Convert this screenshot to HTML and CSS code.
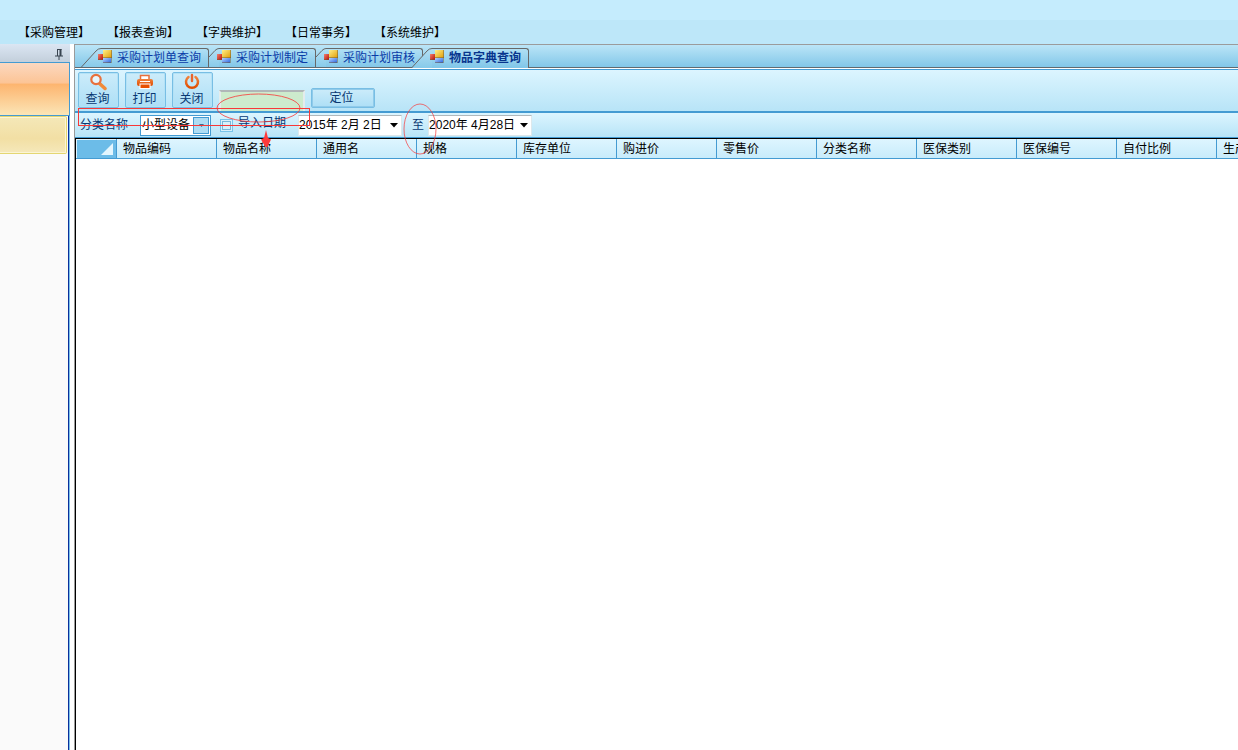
FILE: index.html
```html
<!DOCTYPE html>
<html lang="zh-CN">
<head>
<meta charset="utf-8">
<title>物品字典查询</title>
<link rel="stylesheet" href="styles.css">
</head>
<body>
<svg class="defs" width="0" height="0" aria-hidden="true">
  <defs>
    <linearGradient id="tabFill" x1="0" y1="0" x2="0" y2="1"><stop offset="0" stop-color="#b5e0f4"/><stop offset="1" stop-color="#86caea"/></linearGradient>
    <linearGradient id="gold" x1="0" y1="0" x2="1" y2="1"><stop offset="0" stop-color="#fff08a"/><stop offset="1" stop-color="#e09a00"/></linearGradient>
    <linearGradient id="red" x1="0" y1="0" x2="1" y2="1"><stop offset="0" stop-color="#f08070"/><stop offset="1" stop-color="#b81004"/></linearGradient>
    <linearGradient id="blue" x1="0" y1="0" x2="1" y2="1"><stop offset="0" stop-color="#b4d4ff"/><stop offset="1" stop-color="#2a62e0"/></linearGradient>
    <linearGradient id="orange" x1="0" y1="0" x2="0" y2="1"><stop offset="0" stop-color="#f0823c"/><stop offset="1" stop-color="#e04c00"/></linearGradient>
    <symbol id="form" viewBox="0 0 14 14">
      <rect x="0" y="4" width="5" height="6" fill="url(#red)"/>
      <rect x="5" y="8" width="8" height="5" fill="url(#blue)"/>
      <rect x="5" y="0" width="9" height="8" fill="url(#gold)"/>
      <path d="M13.5 0V13M5 7.5H14M5 12.5H13M0 9.500H5" stroke="#705c38" stroke-opacity=".5" fill="none"/>
    </symbol>
    <symbol id="slantWide" viewBox="0 0 20 20">
      <path d="M0 20 15 3Q17 .5 20 .5V20Z" fill="url(#tabFill)"/>
      <path d="M0 19.500 15 3Q17 .5 20 .5" fill="none" stroke="#686868"/>
    </symbol>
    <symbol id="slant" viewBox="0 0 10 20">
      <path d="M0 20V9L6 2.500Q8 .5 10 .5V20Z" fill="url(#tabFill)"/>
      <path d="M0 9 6 2.500Q8 .5 10 .5" fill="none" stroke="#686868"/>
    </symbol>
  </defs>
</svg>
<header class="top">
  <div class="title-strip"></div>
  <nav class="menu">
    <a href="#purchase">【采购管理】</a>
    <a href="#report">【报表查询】</a>
    <a href="#dict">【字典维护】</a>
    <a href="#daily">【日常事务】</a>
    <a href="#system">【系统维护】</a>
  </nav>
</header>
<div class="workspace">
  <aside class="side">
    <div class="side-head">
      <button class="pin" type="button" aria-label="固定">
        <svg width="8" height="11" viewBox="0 0 8 11"><path d="M2 .5H6.500M2.500 0V7M0 7H8M4 7V11" stroke="#384450" fill="none"/><path d="M5.500 0V7" stroke="#384450" stroke-width="2"/></svg>
      </button>
    </div>
    <div class="side-group"></div>
    <div class="side-body"><div class="side-item"></div></div>
  </aside>
  <main class="main">
    <div class="tabs">
      <button class="tab wide" type="button"><svg class="edge"><use href="#slantWide"/></svg><svg class="form"><use href="#form"/></svg><span>采购计划单查询</span></button>
      <button class="tab" type="button"><svg class="edge"><use href="#slant"/></svg><svg class="form"><use href="#form"/></svg><span>采购计划制定</span></button>
      <button class="tab" type="button"><svg class="edge"><use href="#slant"/></svg><svg class="form"><use href="#form"/></svg><span>采购计划审核</span></button>
      <button class="tab wide active" type="button"><svg class="edge"><use href="#slantWide"/></svg><svg class="form"><use href="#form"/></svg><span>物品字典查询</span></button>
      <div class="tab-rest"></div>
    </div>
    <div class="toolbar">
      <button class="tool" type="button">
        <svg width="18" height="18" viewBox="0 0 18 18"><path d="m10.500 10.500 5.500 5" stroke="#f08a38" stroke-width="3.500" stroke-linecap="round"/><circle cx="7" cy="6.500" r="4.700" fill="#e8f6fc" stroke="#e8703c" stroke-width="2.200"/></svg>
        <span>查询</span>
      </button>
      <button class="tool" type="button">
        <svg width="18" height="18" viewBox="0 0 18 18"><path d="M4.500 6V2.500H13V6" fill="#fff" stroke="#e8703c" stroke-width="1.500"/><rect x="1" y="6" width="16" height="7" rx="2" fill="url(#orange)"/><path d="M4 8.500H14" stroke="#fff"/><rect x="4" y="11" width="10" height="4.500" fill="#e85000" stroke="#fff"/></svg>
        <span>打印</span>
      </button>
      <button class="tool" type="button">
        <svg width="18" height="18" viewBox="0 0 18 18"><path d="M5.500 4A6 6 0 1 0 12.500 4" fill="none" stroke="url(#orange)" stroke-width="2.500" stroke-linecap="round"/><path d="M9 2V8" stroke="#e8642c" stroke-width="2.400" stroke-linecap="round"/></svg>
        <span>关闭</span>
      </button>
      <input class="search" type="text" aria-label="定位内容">
      <button class="locate" type="button">定位</button>
    </div>
    <div class="filter">
      <label for="category">分类名称</label>
      <div class="combo">
        <select id="category"><option>小型设备</option></select>
        <span class="drop"><svg width="5" height="3" viewBox="0 0 5 3"><path d="M0 0H5L2.500 3Z" fill="#3a6e92"/></svg></span>
      </div>
      <input class="check" id="byDate" type="checkbox">
      <label class="date-label" for="byDate">导入日期</label>
      <div class="date">
        <input type="text" value="2015年 2月 2日" aria-label="开始日期">
        <button type="button" aria-label="选择开始日期"><svg width="8" height="5" viewBox="0 0 8 5"><path d="M0 0H8L4 4.500Z"/></svg></button>
      </div>
      <span class="to">至</span>
      <div class="date">
        <input type="text" value="2020年 4月28日" aria-label="结束日期">
        <button type="button" aria-label="选择结束日期"><svg width="8" height="5" viewBox="0 0 8 5"><path d="M0 0H8L4 4.500Z"/></svg></button>
      </div>
    </div>
    <div class="grid">
      <table>
        <thead>
          <tr>
            <th class="corner"><svg width="12" height="12" viewBox="0 0 12 12"><path d="M12 0V12H0Z" fill="#e4f6fe"/></svg></th>
            <th>物品编码</th><th>物品名称</th><th>通用名</th><th>规格</th><th>库存单位</th><th>购进价</th><th>零售价</th><th>分类名称</th><th>医保类别</th><th>医保编号</th><th>自付比例</th><th>生产厂家</th>
          </tr>
        </thead>
      </table>
    </div>
    <svg class="marks" width="460" height="120" viewBox="74 44 460 120" aria-hidden="true">
      <g fill="none" stroke="#f83838">
        <rect x="78.500" y="108.500" width="231" height="17"/>
        <ellipse cx="258.500" cy="108" rx="41.500" ry="14" stroke-opacity=".8"/>
        <ellipse cx="420" cy="129" rx="16" ry="25" stroke-opacity=".7"/>
      </g>
      <path d="M266 130 268 138 271 139.500 267.500 147H265.500L261 139.500 264 138Z" fill="#ff3a3a"/>
    </svg>
  </main>
</div>
</body>
</html>
```
FILE: styles.css
```css
* { box-sizing: border-box; }
html, body { height: 100%; }
body {
  margin: 0;
  display: flex;
  flex-direction: column;
  overflow: hidden;
  background: #fff;
  color: #000;
  font: 12px/16px "Liberation Sans", "Noto Sans CJK SC", sans-serif;
}
button, input, select { font: inherit; color: inherit; margin: 0; padding: 0; border: 0; border-radius: 0; }
button { background: none; }
.defs { position: absolute; }

.top { background: #bde7f9; }
.title-strip { height: 20px; background: #c5ecfd; }
.menu { display: flex; gap: 17px; height: 24px; padding: 5px 18px 0; }
.menu a { color: #000; text-decoration: none; white-space: nowrap; }

.workspace { flex: 1; display: flex; min-height: 0; }
.side { width: 70px; flex: none; display: flex; flex-direction: column; margin-right: 4px; }
.side-head {
  height: 18px;
  display: flex;
  justify-content: flex-end;
  padding: 5px 7px 0 0;
  background: linear-gradient(#dbe6f3, #c3cfdb);
}
.pin { display: flex; width: 8px; height: 11px; }
.side-group {
  height: 54px;
  border: solid #449bd2;
  border-width: 1px 1px 1px 0;
  background: linear-gradient(#fbd8c0, #fcc495 39%, #fdb46e 40%, #fbe5b6);
}
.side-body {
  flex: 1;
  background: #fafafa;
  border-right: 1px solid #7cc0e8;
  box-shadow: inset -1px 0 #0a309c;
  padding-right: 2px;
}
.side-item {
  height: 38px;
  border: solid #e4d672;
  border-width: 1px 1px 1px 0;
  border-radius: 0 2px 2px 0;
  box-shadow: inset -1px 1px #fbf5d4, inset 0 -1px #fbf5d4;
  background: linear-gradient(#f4e8b8, #f2dfa4 60%, #f5e8ba);
}

.main {
  position: relative;
  flex: 1;
  min-width: 0;
  display: flex;
  flex-direction: column;
  border: solid #9b9b9b;
  border-width: 1px 0 0 1px;
}
.tabs { display: flex; height: 23px; padding: 3px 0 0 6px; background: linear-gradient(#bbe5f7, #80c6e8); position: relative; }
.tabs::before { content: ""; position: absolute; left: 0; bottom: 0; width: 6px; height: 1px; background: #606a70; }
.tab {
  position: relative;
  display: flex;
  align-items: center;
  gap: 5px;
  height: 20px;
  padding: 0 8px;
  border-bottom: 1px solid #606a70;
  color: #0a3ca8;
  white-space: nowrap;
}
.tab::before {
  content: "";
  position: absolute;
  inset: 0 0 0 10px;
  border: solid #686868;
  border-width: 1px 1px 0 0;
  border-radius: 0 3px 0 0;
}
.tab.wide { padding-left: 17px; }
.tab.wide::before { left: 20px; }
.edge { position: absolute; left: 0; top: 0; width: 10px; height: 20px; clip-path: inset(0 0 1px 0); }
.wide .edge { width: 20px; }
.form { position: relative; width: 14px; height: 14px; margin-bottom: 2px; }
.tab span { position: relative; }
.tab.active { margin-left: -11px; padding-left: 18px; border-bottom: 0; font-weight: bold; color: #08358e; }
.active .edge { clip-path: none; }
.tab-rest { flex: 1; height: 20px; border-bottom: 1px solid #606a70; }

.toolbar {
  display: flex;
  align-items: flex-start;
  height: 42px;
  padding: 2px 3px 0;
  border-top: 1px solid #449bd2;
  margin-top: 1px;
  background: linear-gradient(#dcf5ff, #b8e4f7);
}
.tool, .locate {
  border: 1px solid #78bee4;
  border-radius: 2px;
  box-shadow: inset 0 0 0 1px #b4e2f6;
  background: linear-gradient(#ccecfa, #addff6);
  color: #083872;
}
.tool {
  display: flex;
  flex-direction: column;
  align-items: center;
  width: 41px;
  height: 36px;
  margin-right: 6px;
  padding-right: 2px;
}
.tool span { line-height: 16px; }
.search {
  align-self: flex-end;
  width: 86px;
  height: 21px;
  background: #cdebcd;
  border: solid #e4ecec;
  border-width: 2px 2px 0;
  border-top-color: #b0b6b8;
}
.locate { width: 64px; height: 20px; margin: 16px 0 0 6px; padding-right: 3px; box-shadow: inset 0 0 0 1px #90cbea; line-height: 16px; }

.filter {
  display: flex;
  align-items: center;
  height: 27px;
  padding: 0 5px;
  border-top: 2px solid #449bd2;
  border-bottom: 1px solid #449bd2;
  background: linear-gradient(#dcf5ff, #b8e4f7);
  color: #083872;
  white-space: nowrap;
}
.combo {
  position: relative;
  width: 71px;
  height: 21px;
  margin-left: 12px;
  border: 1px solid #449bd2;
  background: #fff;
  color: #000;
}
.combo select { appearance: none; width: 100%; height: 19px; padding-left: 1px; background: none; }
.drop {
  position: absolute;
  top: 1px;
  right: 1px;
  width: 16px;
  height: 17px;
  display: flex;
  align-items: center;
  justify-content: center;
  border: 1px solid #449bd2;
  background: #aeddf4;
  pointer-events: none;
}
.check {
  appearance: none;
  width: 13px;
  height: 13px;
  margin-left: 9px;
  border: 1px solid #78c4ea;
  background: #d8f1fc;
  box-shadow: inset 0 0 0 1px #d8f1fc, inset 0 0 0 2px #78b8d8;
}
.date-label { padding: 0 0 5px 5px; }
.date {
  display: flex;
  align-items: center;
  width: 104px;
  height: 21px;
  margin-left: 12px;
  border: 1px solid #dde8ec;
  border-top-color: #b0b8bc;
  background: #fff;
  color: #000;
}
.date input { width: 88px; background: none; }
.date button { display: flex; width: 14px; justify-content: center; }
.to { margin-left: 10px; }
.to + .date { margin-left: 4px; }

.grid { flex: 1; overflow: hidden; border: solid #000; border-width: 1px 0 0 1px; background: #fff; }
table { table-layout: fixed; width: 1241px; border-collapse: separate; border-spacing: 0; }
th {
  width: 100px;
  height: 20px;
  padding: 0 0 0 6px;
  text-align: left;
  font-weight: normal;
  white-space: nowrap;
  border-right: 1px solid #449bd2;
  border-bottom: 1px solid #449bd2;
  background: linear-gradient(#def5ff, #c8ecfb);
}
.corner { width: 41px; padding: 0 3px 0 0; background: #6cbce8; box-shadow: inset 1px 1px #dff4ff; }
.corner svg { display: block; margin-left: auto; }

.marks { position: absolute; left: -1px; top: -1px; pointer-events: none; }
```
